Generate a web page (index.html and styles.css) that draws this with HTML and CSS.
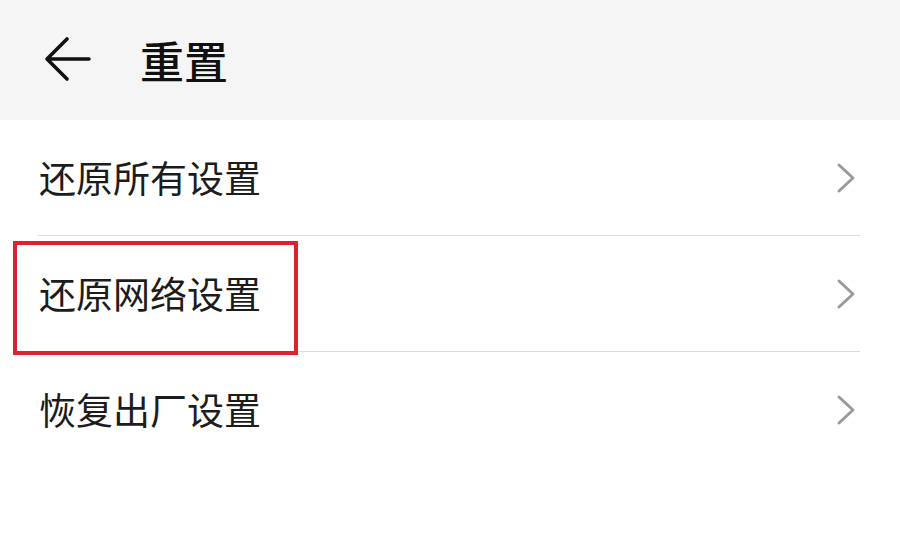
FILE: index.html
```html
<!DOCTYPE html>
<html lang="zh-CN">
<head>
<meta charset="utf-8">
<link rel="stylesheet" href="styles.css">
</head>
<body>
<div class="page">
  <header class="header">
    <svg class="back" width="50" height="50" viewBox="0 0 50 50"><path d="M48 24H6M26 4L6 24l20 20" fill="none" stroke="#111" stroke-width="3.6" stroke-linecap="round" stroke-linejoin="round"/></svg>
    <h1 class="title">重置</h1>
  </header>
  <ul class="list">
    <li class="row"><span class="label">还原所有设置</span><svg class="chev" width="20" height="32" viewBox="0 0 20 32"><path d="M3 3l14 13L3 29" fill="none" stroke="#9a9a9a" stroke-width="3" stroke-linecap="round" stroke-linejoin="round"/></svg></li>
    <li class="row"><span class="label">还原网络设置</span><svg class="chev" width="20" height="32" viewBox="0 0 20 32"><path d="M3 3l14 13L3 29" fill="none" stroke="#9a9a9a" stroke-width="3" stroke-linecap="round" stroke-linejoin="round"/></svg></li>
    <li class="row"><span class="label">恢复出厂设置</span><svg class="chev" width="20" height="32" viewBox="0 0 20 32"><path d="M3 3l14 13L3 29" fill="none" stroke="#9a9a9a" stroke-width="3" stroke-linecap="round" stroke-linejoin="round"/></svg></li>
  </ul>
  <div class="highlight"></div>
</div>
</body>
</html>
```

FILE: styles.css
```css
html, body {
  margin: 0;
  padding: 0;
  background: #ffffff;
  font-family: "Noto Sans CJK SC", "Noto Sans", sans-serif;
}
.page {
  position: relative;
  width: 900px;
  height: 533px;
  overflow: hidden;
  background: #ffffff;
}
.header {
  height: 120px;
  background: #f5f5f5;
  display: flex;
  align-items: center;
  padding-left: 41px;
  box-sizing: border-box;
}
.back {
  display: block;
  margin-top: 0;
}
.title {
  margin: 0 0 0 49px;
  font-size: 44px;
  font-weight: 500;
  color: #111;
  line-height: 1;
  letter-spacing: 0;
}
.list {
  list-style: none;
  margin: 0;
  padding: 0 40px 0 38px;
}
.row {
  height: 115px;
  display: flex;
  align-items: center;
  justify-content: space-between;
  border-bottom: 1px solid #dcdcdc;
  padding-left: 1px;
}
.row:last-child {
  border-bottom: none;
}
.label {
  font-size: 37px;
  color: #1c1c1c;
  line-height: 1;
}
.chev {
  display: block;
  margin-right: 4px;
}
.highlight {
  position: absolute;
  left: 13px;
  top: 241px;
  width: 285px;
  height: 114px;
  box-sizing: border-box;
  border: 4px solid #d9232e;
}
```
